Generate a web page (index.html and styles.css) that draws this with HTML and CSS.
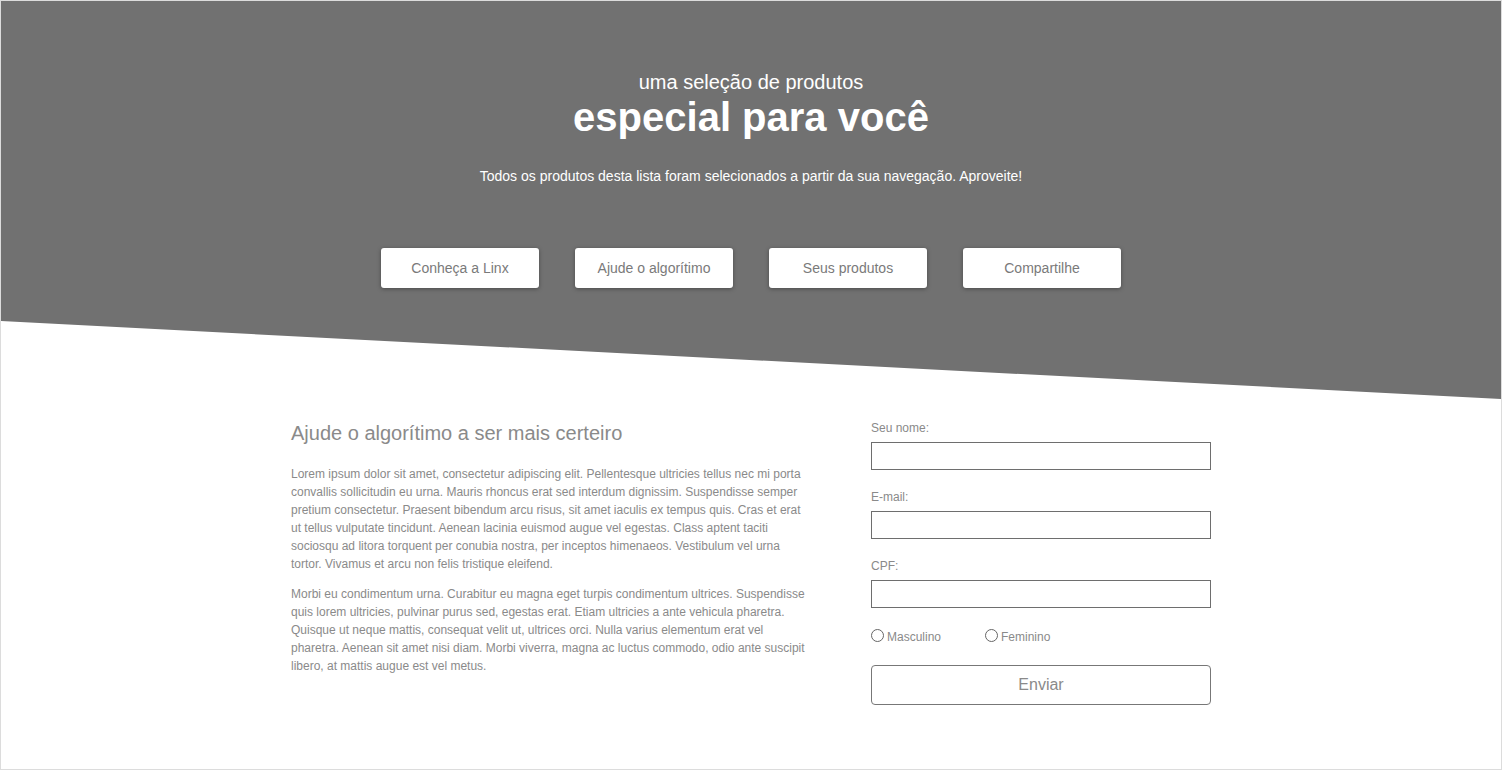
FILE: index.html
```html
<!DOCTYPE html>
<html lang="pt-BR">
<head>
<meta charset="utf-8">
<title>Especial para você</title>
<link rel="stylesheet" href="styles.css">
</head>
<body>
<div class="page">
  <header class="hero">
    <p class="hero-kicker">uma seleção de produtos</p>
    <h1 class="hero-title">especial para você</h1>
    <p class="hero-sub">Todos os produtos desta lista foram selecionados a partir da sua navegação. Aproveite!</p>
    <nav class="hero-nav">
      <a class="hero-btn" href="#">Conheça a Linx</a>
      <a class="hero-btn" href="#">Ajude o algorítimo</a>
      <a class="hero-btn" href="#">Seus produtos</a>
      <a class="hero-btn" href="#">Compartilhe</a>
    </nav>
  </header>
  <main class="content">
    <section class="intro">
      <h2 class="intro-title">Ajude o algorítimo a ser mais certeiro</h2>
      <p class="intro-text">Lorem ipsum dolor sit amet, consectetur adipiscing elit. Pellentesque ultricies tellus nec mi porta convallis sollicitudin eu urna. Mauris rhoncus erat sed interdum dignissim. Suspendisse semper pretium consectetur. Praesent bibendum arcu risus, sit amet iaculis ex tempus quis. Cras et erat ut tellus vulputate tincidunt. Aenean lacinia euismod augue vel egestas. Class aptent taciti sociosqu ad litora torquent per conubia nostra, per inceptos himenaeos. Vestibulum vel urna tortor. Vivamus et arcu non felis tristique eleifend.</p>
      <p class="intro-text">Morbi eu condimentum urna. Curabitur eu magna eget turpis condimentum ultrices. Suspendisse quis lorem ultricies, pulvinar purus sed, egestas erat. Etiam ultricies a ante vehicula pharetra. Quisque ut neque mattis, consequat velit ut, ultrices orci. Nulla varius elementum erat vel pharetra. Aenean sit amet nisi diam. Morbi viverra, magna ac luctus commodo, odio ante suscipit libero, at mattis augue est vel metus.</p>
    </section>
    <form class="form">
      <label class="field">
        <span class="field-label">Seu nome:</span>
        <input class="field-input" type="text">
      </label>
      <label class="field">
        <span class="field-label">E-mail:</span>
        <input class="field-input" type="text">
      </label>
      <label class="field">
        <span class="field-label">CPF:</span>
        <input class="field-input" type="text">
      </label>
      <div class="radios">
        <label class="radio"><span class="radio-dot"></span>Masculino</label>
        <label class="radio"><span class="radio-dot"></span>Feminino</label>
      </div>
      <button class="submit" type="button">Enviar</button>
    </form>
  </main>
</div>
</body>
</html>
```

FILE: styles.css
```css
* { box-sizing: border-box; }
html, body { margin: 0; padding: 0; }
body {
  font-family: "Liberation Sans", Arial, sans-serif;
  background: #fff;
}
.page {
  width: 1502px;
  height: 770px;
  border: 1px solid #dcdcdc;
  position: relative;
  overflow: hidden;
}
.hero {
  height: 398px;
  background: #717171;
  clip-path: polygon(0 0, 100% 0, 100% 100%, 0 320px);
  display: flex;
  flex-direction: column;
  align-items: center;
  padding-top: 70px;
  color: #fff;
}
.hero-kicker {
  margin: 0;
  font-size: 20px;
  line-height: 22px;
}
.hero-title {
  margin: 0;
  font-size: 40px;
  line-height: 48px;
  font-weight: bold;
}
.hero-sub {
  margin: 27px 0 0;
  font-size: 14px;
  line-height: 16px;
}
.hero-nav {
  display: flex;
  gap: 36px;
  margin-top: 64px;
}
.hero-btn {
  width: 158px;
  height: 40px;
  background: #fff;
  border-radius: 3px;
  box-shadow: 0 1px 4px rgba(0,0,0,0.35);
  color: #7a7a7a;
  font-size: 14px;
  text-decoration: none;
  display: flex;
  align-items: center;
  justify-content: center;
}
.content {
  width: 920px;
  margin: 0 auto;
  margin-top: 22px;
  display: flex;
  gap: 60px;
  position: relative;
}
.intro { width: 520px; }
.intro-title {
  margin: 0 0 20px;
  font-size: 20px;
  line-height: 24px;
  font-weight: normal;
  color: #8a8a8a;
}
.intro-text {
  margin: 0 0 12px;
  font-size: 12px;
  line-height: 18px;
  color: #8a8a8a;
}
.form {
  width: 340px;
  display: flex;
  flex-direction: column;
  margin-top: 0;
}
.field {
  display: flex;
  flex-direction: column;
  margin-bottom: 20px;
}
.field-label {
  font-size: 12px;
  line-height: 14px;
  color: #8a8a8a;
  margin-bottom: 7px;
}
.field-input {
  height: 28px;
  border: 1px solid #6e6e6e;
  border-radius: 0;
  margin: 0;
  padding: 0 6px;
  font: inherit;
}
.radios {
  display: flex;
  gap: 44px;
  margin-top: 2px;
}
.radio {
  display: flex;
  align-items: center;
  font-size: 12px;
  color: #8a8a8a;
  line-height: 14px;
}
.radio-dot {
  width: 13px;
  height: 13px;
  border: 1px solid #666;
  border-radius: 50%;
  margin-right: 3px;
  margin-top: -3px;
}
.submit {
  margin-top: 21px;
  height: 40px;
  border: 1px solid #777;
  border-radius: 4px;
  background: #fff;
  color: #8a8a8a;
  font-family: inherit;
  font-size: 16px;
}
```
